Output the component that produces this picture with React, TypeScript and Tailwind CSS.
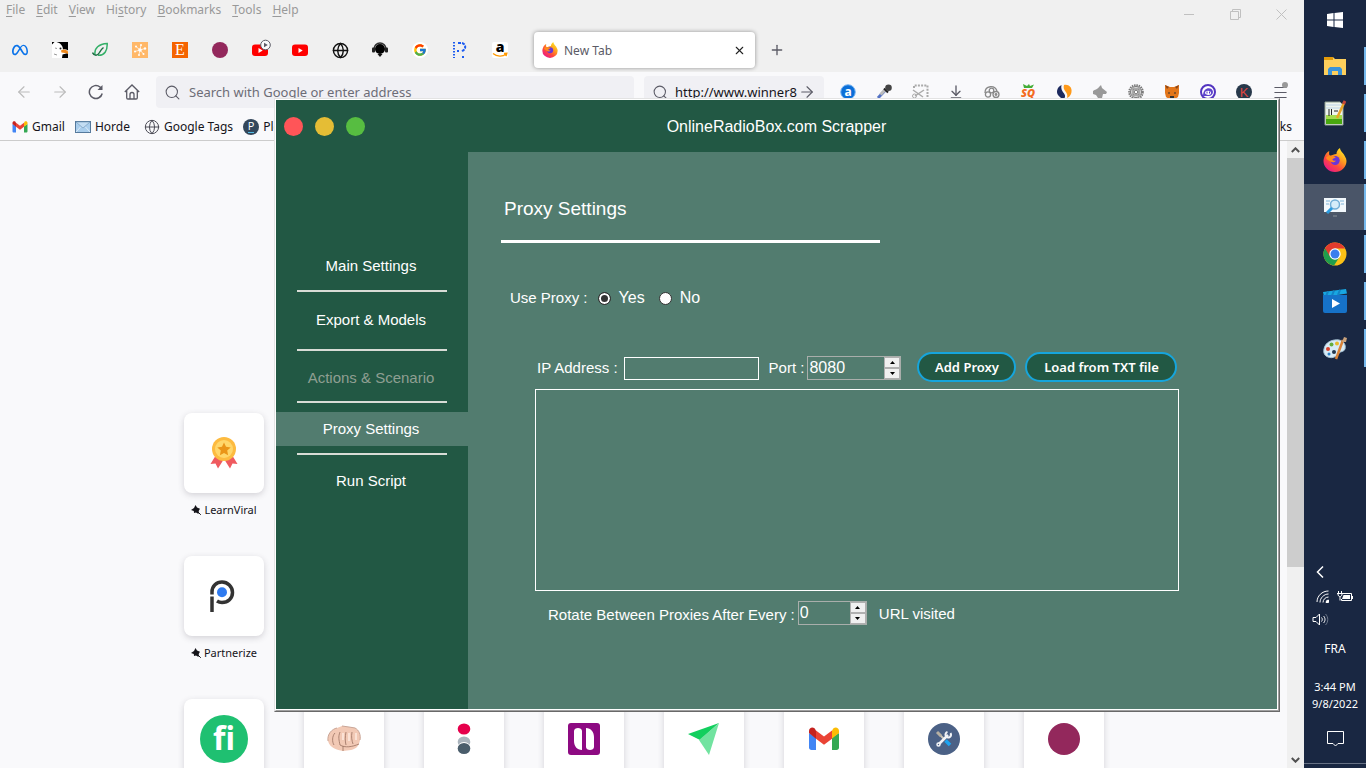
import type { ReactNode } from 'react'
import { ArrowDownToLine, ArrowLeft, ArrowRight, Globe, Menu, Plus, Search, X } from 'lucide-react'
import { FaMeta } from 'react-icons/fa6'
import { FcGoogle } from 'react-icons/fc'

const UI_FONT = "font-['Noto_Sans','Open_Sans',sans-serif]"
const APP_FONT = "font-['Liberation_Sans',Arial,sans-serif]"

/* ---------- logos ---------- */

const FirefoxIcon = ({ size = 16 }: { size?: number }) => (
  <svg width={size} height={size} viewBox="0 0 24 24" aria-hidden="true">
    <defs>
      <linearGradient id="ffBody" x1="0.85" y1="0.1" x2="0.2" y2="0.95">
        <stop offset="0" stopColor="#ffe226" />
        <stop offset="0.35" stopColor="#ff9a1f" />
        <stop offset="0.65" stopColor="#ff4a3d" />
        <stop offset="1" stopColor="#e9178a" />
      </linearGradient>
    </defs>
    <path
      d="M22 8.500C21 6 19 4.500 17.800 2.500 17.300 1.500 17 .8 17 0c-2.500 1.500-3.600 4.300-3.500 6-2.500.1-4.500 1-6 2.200L6.400 7C6 6 6 4.500 6.300 3 4.500 3.800 3 5.500 2 7.500c-1 2-1.500 4-1.500 5.500a11.500 11 0 0 0 23 0c0-1.500-.5-3-1.500-4.500Z"
      fill="url(#ffBody)"
    />
    <circle cx="12.200" cy="12.500" r="4.500" fill="#6a35d8" />
    <path d="M3 9.500c2.500-3 7.500-2.500 9.800.3-1.800.2-3 1-3.400 2 .5 1 2 1.300 3.600.9-1 1.300-3.200 2.400-6 .5-1.800-1.300-3.800-1.500-4-3.700Z" fill="#ff8a1c" />
  </svg>
)

const GmailIcon = ({ size = 16 }: { size?: number }) => (
  <svg width={size} height={size} viewBox="0 0 32 32" aria-hidden="true">
    <path d="M1 10v14.500c0 1.400 1 2.500 2.500 2.500H8V14.500Z" fill="#4285f4" />
    <path d="M31 10v14.500c0 1.400-1 2.500-2.500 2.500H24V14.500Z" fill="#34a853" />
    <path d="M24 7.500v8L31 10V8c0-3.200-3.200-4.500-5.500-2.800Z" fill="#fbbc04" />
    <path d="M8 7.500 16 13.500 24 7.500v8.200L16 21.700 8 15.700Z" fill="#ea4335" />
    <path d="M8 7.500v8.200L1 10V8c0-3.200 3.200-4.500 5.500-2.800Z" fill="#c5221f" />
  </svg>
)

const YoutubeIcon = ({ playing = false }: { playing?: boolean }) => (
  <svg width="20" height="20" viewBox="0 0 20 20" overflow="visible" aria-hidden="true">
    <rect x="2" y="4.500" width="16" height="11.500" rx="3" fill="#f00" />
    <path d="M8.500 8v5l4.200-2.500Z" fill="#fff" />
    {playing && (
      <g>
        <circle cx="15.500" cy="5" r="4.800" fill="#f9f9fb" stroke="#5b5b66" />
        <path d="M14 2.700v4.600l3.800-2.300Z" fill="#5b5b66" />
      </g>
    )}
  </svg>
)

const EagleIcon = () => (
  <svg width="16" height="16" viewBox="0 0 16 16" aria-hidden="true">
    <path d="M0 0h16v16H0Z" fill="#fff" />
    <path d="M4.500 0H16v8.500c-1.500-1-3-1.500-5-1C10.800 3.500 8.500 1 4.500 0Z" />
    <path d="M10.500 12.500 16 11v5h-6Z" />
    <path d="M0 0h2.500L0 2.500Z" />
    <path d="M9 8.500c3-2 5.500-.5 7 1v2.500c-2-1.500-4-1-6.500-1.500Z" fill="#f08a1d" />
    <circle cx="8.500" cy="6.500" r="1" fill="#222" />
    <path d="M3 6l2 .5M2 12l3 1" stroke="#999" />
  </svg>
)

const LeafIcon = () => (
  <svg width="16" height="16" viewBox="0 0 16 16" fill="none" aria-hidden="true">
    <path d="M3 13C2 6 7 2 15.200 1.500c.3 7-2.700 12.300-9.200 11.800" stroke="#34b068" strokeWidth="1.500" />
    <path d="M.5 10.500c2 4 5 3.500 7 0 1-2 2-3.500 4-5" stroke="#1f6e45" strokeWidth="1.500" />
  </svg>
)

const HubIcon = () => (
  <svg width="16" height="16" viewBox="0 0 16 16" aria-hidden="true">
    <path d="M0 0h16v16H0Z" fill="#ffb869" />
    <path d="M8 8 4 4.500M8 8l1-5M8 8l5-1.500M8 8l3.500 4M8 8l-1 4.500M8 8 3 9.500" stroke="#fff" strokeWidth=".7" />
    <g fill="#fff">
      <circle cx="8" cy="8" r="1.800" />
      <circle cx="4" cy="4.500" r="1" />
      <circle cx="9" cy="3" r="1" />
      <circle cx="13" cy="6.500" r="1.200" />
      <circle cx="11.500" cy="12" r="1" />
      <circle cx="7" cy="13" r="1" />
      <circle cx="3" cy="9.500" r="1" />
    </g>
  </svg>
)

const EtsyIcon = () => (
  <span className="flex size-4 items-center justify-center bg-[#f56400] font-['Liberation_Serif',serif] text-base leading-4 text-white">E</span>
)

const HeadsetIcon = () => (
  <svg width="16" height="16" viewBox="0 0 16 16" aria-hidden="true">
    <path d="M2 7a6 6 0 0 1 12 0" stroke="#333" strokeWidth="1.500" fill="none" />
    <circle cx="8" cy="7" r="5" fill="#000" />
    <rect y="5.500" width="3" height="5" rx="1" fill="#222" />
    <rect x="13" y="5.500" width="3" height="5" rx="1" fill="#222" />
    <path d="M5.500 12h5L8 15Z" fill="#111" />
  </svg>
)

const DotsPIcon = () => (
  <svg width="16" height="16" viewBox="0 0 16 16" fill="none" stroke="#1d5cf0" strokeWidth="2" aria-hidden="true">
    <path d="M2 0v16" strokeDasharray="1.500 1.500" />
    <path d="M6 1h4a4 4 0 0 1 1 7.500L9.500 10" strokeDasharray="3 1" />
    <path d="M5 9h3M10 15h3" strokeDasharray="2 1" />
  </svg>
)

const AmazonIcon = () => (
  <span className="relative flex size-4 items-center justify-center rounded-xs bg-white">
    <span className="-mt-1.5 font-['Open_Sans',sans-serif] text-[14px] leading-5 font-extrabold text-black">a</span>
    <svg className="absolute inset-0" width="16" height="16" viewBox="0 0 16 16" aria-hidden="true">
      <path d="M1 11.500c4 3.300 9.500 3.300 13 .8M12 11.500l2.800-.2-.8 2.800" stroke="#f90" strokeWidth="1.400" fill="none" />
    </svg>
  </span>
)

const MailIcon = () => (
  <svg width="16" height="16" viewBox="0 0 16 16" aria-hidden="true">
    <rect x=".5" y="2.500" width="15" height="11" fill="#a9cdec" stroke="#55799c" />
    <path d="M1 13l5-5.500M15 13l-5-5.500" fill="none" stroke="#dcebf8" />
    <path d="M1 3l7 6 7-6Z" fill="#c3ddf3" stroke="#6f93b5" strokeWidth=".6" />
  </svg>
)

const PleskIcon = () => (
  <svg width="16" height="16" viewBox="0 0 16 16" aria-hidden="true">
    <circle cx="8" cy="8" r="8" fill="#33475b" />
    <text x="8" y="11" textAnchor="middle" fontFamily="Open Sans" fontSize="11" fill="#fff">P</text>
    <path d="M5 13.500h6" stroke="#53bce6" />
  </svg>
)

const ReloadIcon = () => (
  <svg width="16" height="16" viewBox="0 0 16 16" fill="none" stroke="#5b5b66" strokeWidth="1.500" aria-hidden="true">
    <path d="M14.200 9.500A6.500 6.500 0 1 1 12 3l1.500 1.500" />
    <path d="M14.500 1v5h-5Z" fill="#5b5b66" stroke="none" />
  </svg>
)

const HomeIcon = () => (
  <svg width="16" height="16" viewBox="0 0 16 16" fill="none" stroke="#5b5b66" strokeWidth="1.300" aria-hidden="true">
    <path d="M.8 8 8 1l7.200 7M2.700 6.500v7.300c0 .8.4 1.200 1.200 1.200h8.200c.8 0 1.200-.4 1.200-1.200V6.500M6 15v-4.500a2 2 0 0 1 4 0V15" />
  </svg>
)

/* ---------- toolbar extensions ---------- */

const extensions: { name: string; icon: ReactNode }[] = [
  {
    name: 'Ahrefs',
    icon: (
      <>
        <circle cx="8" cy="8" r="7.300" fill="#0b6fd8" stroke="#7cb6f2" />
        <text x="8" y="12" textAnchor="middle" fontFamily="Open Sans" fontWeight="700" fontSize="12" fill="#fff">a</text>
      </>
    ),
  },
  {
    name: 'Color picker',
    icon: (
      <>
        <path d="M2 14 9 6.500" stroke="#5472c4" strokeWidth="3" />
        <path d="M4.500 10.500 9.500 5.500" stroke="#bbb" strokeWidth="3" />
        <path d="M8 4.500 12 8.500" stroke="#222" strokeWidth="2" />
        <circle cx="12.500" cy="3.800" r="3.300" fill="#444" />
      </>
    ),
  },
  {
    name: 'Screenshot',
    icon: (
      <g fill="none" stroke="#aaa">
        <path d="M2 4V1.500h13.500V13" strokeWidth="2" strokeDasharray="2 1.200" />
        <path d="M1 6l10 7M12 6 3 12" strokeWidth="1.500" />
        <circle cx="2.500" cy="12" r="2" />
      </g>
    ),
  },
  { name: 'Downloads', icon: <ArrowDownToLine size={16} color="#5b5b66" strokeWidth={2} /> },
  {
    name: 'Cookies',
    icon: (
      <g fill="none" stroke="#888" strokeWidth="1.300">
        <path d="M1 9c0-8 10-8 12-2" />
        <circle cx="4" cy="10.500" r="2.600" />
        <circle cx="7.500" cy="6.500" r="2.300" />
        <circle cx="12" cy="10.500" r="3" />
        <circle cx="12" cy="10.500" r=".8" />
      </g>
    ),
  },
  {
    name: 'SEOquake',
    icon: (
      <>
        <path d="M3 0 7 2l2-2 1 2 4-1.500-2 3.500H4Z" fill="#44ad37" />
        <text x="8" y="13" textAnchor="middle" fontFamily="Open Sans" fontStyle="italic" fontWeight="800" fontSize="11" fill="#f36c21">SQ</text>
      </>
    ),
  },
  {
    name: 'Similarweb',
    icon: (
      <>
        <path d="M5.500 1C1 3 0 8 2 11c2 3 6 5 7 2 1-4-5-5-3.500-12Z" fill="#1d2a5e" />
        <path d="M8 1c6-1 9 4 7 9-1 2-2 3-4 4 2-6-5-7-3-13Z" fill="#ff9a1a" />
      </>
    ),
  },
  { name: 'Wappalyzer', icon: <path d="M1 7c2-2 4-1 6-4l2-2 1 3 5 4-1 2-3 0-1 4H6L4 11 1 10Z" fill="#999" /> },
  {
    name: 'Settings',
    icon: (
      <g fill="none" stroke="#777">
        <circle cx="8" cy="8" r="6.800" strokeWidth="2" strokeDasharray="1.500 .8" />
        <circle cx="8" cy="8" r="5.500" fill="#ddd" />
        <circle cx="8" cy="8" r="1.800" fill="#fff" />
        <path d="M5 5h6v6H5Z" />
      </g>
    ),
  },
  {
    name: 'MetaMask',
    icon: (
      <>
        <path d="m1 1 5 2h4l5-2v8l-1 4-3 2H5l-3-2-1-4Z" fill="#e2761b" />
        <path d="m1 1 4 2-2 2Zm14 0-4 2 2 2Z" fill="#8a4518" />
        <path d="M4 8.500h2v1H4Zm6 0h2v1h-2ZM6 12h4v2H6Z" fill="#333" />
      </>
    ),
  },
  {
    name: 'Ghostery',
    icon: (
      <>
        <circle cx="8" cy="8" r="7" fill="#fff" stroke="#5335c0" strokeWidth="2" />
        <path d="M3 12C3 2 13 3 13 8c0 2-2 4-4 4Z" fill="#5e45cc" />
        <path d="M5 9c0-3 6-3 6 0s-6 2-6 0Z" fill="#fff" />
        <path d="M7 7.500v2M9.500 7.500v2" stroke="#5335c0" />
      </>
    ),
  },
  {
    name: 'Keywords',
    icon: (
      <>
        <circle cx="8" cy="8" r="8" fill="#27384a" />
        <text x="8" y="13" textAnchor="middle" fontFamily="Liberation Sans" fontSize="13" fill="#e0443f">K</text>
      </>
    ),
  },
]

const pinnedTabs: { name: string; icon: ReactNode }[] = [
  { name: 'Meta', icon: <FaMeta size={16} color="#0a73ea" /> },
  { name: 'Eagle', icon: <EagleIcon /> },
  { name: 'Leaf', icon: <LeafIcon /> },
  { name: 'Hub', icon: <HubIcon /> },
  { name: 'Etsy', icon: <EtsyIcon /> },
  { name: 'Radio', icon: <span className="size-4 rounded-full bg-[#93285c]" /> },
  { name: 'YouTube playing', icon: <YoutubeIcon playing /> },
  { name: 'YouTube', icon: <YoutubeIcon /> },
  { name: 'Web', icon: <Globe size={17} color="#111" strokeWidth={2} /> },
  { name: 'Support', icon: <HeadsetIcon /> },
  {
    name: 'Google',
    icon: (
      <span className="rounded-full bg-white p-px">
        <FcGoogle size={14} />
      </span>
    ),
  },
  { name: 'Pixels', icon: <DotsPIcon /> },
  { name: 'Amazon', icon: <AmazonIcon /> },
]

/* ---------- browser ---------- */

const menus = [
  ['', 'F', 'ile'],
  ['', 'E', 'dit'],
  ['', 'V', 'iew'],
  ['Hi', 's', 'tory'],
  ['', 'B', 'ookmarks'],
  ['', 'T', 'ools'],
  ['', 'H', 'elp'],
]

const MenuBar = () => (
  <div className="flex h-7 items-start justify-between bg-[#f0f0f0]">
    <div className="flex gap-[11px] pl-1.5 pt-0.5 text-[12px] leading-4 text-[#999]">
      {menus.map(([before, key, after]) => (
        <button key={after}>
          {before}
          <span className="underline underline-offset-2">{key}</span>
          {after}
        </button>
      ))}
    </div>
    <div className="flex pt-1.5 text-[#c0c0c0]">
      <button aria-label="Minimize" className="flex h-4 w-[46px] items-center justify-center">
        <span className="h-px w-2.5 bg-current" />
      </button>
      <button aria-label="Restore" className="flex h-4 w-[46px] items-center justify-center">
        <svg width="11" height="11" viewBox="0 0 11 11" fill="none" stroke="currentColor" aria-hidden="true">
          <path d="M.5 2.500h8v8h-8ZM2.500 2.500v-2h8v8h-2" />
        </svg>
      </button>
      <button aria-label="Close" className="flex h-4 w-[46px] items-center justify-center">
        <svg width="11" height="11" viewBox="0 0 11 11" fill="none" stroke="currentColor" aria-hidden="true">
          <path d="m.5.5 10 10M10.500.5l-10 10" />
        </svg>
      </button>
    </div>
  </div>
)

const TabStrip = () => (
  <div className="flex h-11 items-center bg-[#f0f0f0]">
    {pinnedTabs.map((tab) => (
      <button key={tab.name} aria-label={tab.name} className="flex h-9 w-10 items-center justify-center">
        {tab.icon}
      </button>
    ))}
    <div className="ml-3.5 flex h-9 w-[221px] items-center rounded bg-white px-2 text-[12px] text-[#5b5b66] shadow-[0_0_4px_rgba(0,0,0,0.4)]">
      <FirefoxIcon />
      <span className="ml-1.5 flex-1 pt-px">New Tab</span>
      <button aria-label="Close tab" className="flex size-4 items-center justify-center">
        <X size={13} color="#222" strokeWidth={2} />
      </button>
    </div>
    <button aria-label="New tab" className="ml-0.5 flex h-9 w-10 items-center justify-center">
      <Plus size={16} color="#5b5b66" strokeWidth={2} />
    </button>
  </div>
)

const NavBar = () => (
  <div className="flex h-10 items-center bg-[#f9f9fb] px-1.5 text-[#5b5b66]">
    <button aria-label="Back" className="flex w-9 justify-center text-[#bbb]">
      <ArrowLeft size={18} strokeWidth={1.500} />
    </button>
    <button aria-label="Forward" className="flex w-9 justify-center text-[#bbb]">
      <ArrowRight size={18} strokeWidth={1.500} />
    </button>
    <button aria-label="Reload" className="flex w-9 justify-center">
      <ReloadIcon />
    </button>
    <button aria-label="Home" className="flex w-9 justify-center">
      <HomeIcon />
    </button>
    <label className="ml-1.5 flex h-8 min-w-0 flex-1 items-center rounded bg-[#f0f0f4] px-2">
      <Search size={17} strokeWidth={1.500} />
      <input
        aria-label="Address"
        placeholder="Search with Google or enter address"
        className="ml-2 min-w-0 flex-1 pt-0.5 text-[13px] outline-none placeholder:text-[#6d6d77]"
      />
    </label>
    <label className="ml-2.5 flex h-8 w-[180px] items-center rounded bg-[#f0f0f4] px-2">
      <Search size={17} strokeWidth={1.500} />
      <input aria-label="Search" defaultValue="http://www.winner8" className="ml-1.5 w-[123px] pt-0.5 text-[13px] text-[#15141a] outline-none" />
      <ArrowRight size={18} strokeWidth={1.500} />
    </label>
    <div className="ml-1.5 flex">
      {extensions.map((ext) => (
        <button key={ext.name} aria-label={ext.name} className="flex w-9 justify-center">
          <svg width="16" height="16" viewBox="0 0 16 16" overflow="visible">
            {ext.icon}
          </svg>
        </button>
      ))}
      <button aria-label="Application menu" className="relative flex w-9 justify-center">
        <Menu size={17} strokeWidth={1.500} />
        <span className="absolute -top-0.5 right-2.5 size-1.5 rounded-full bg-[#999]" />
      </button>
    </div>
  </div>
)

const BookmarksBar = () => (
  <div className="flex h-[29px] items-center gap-2.5 border-b border-[#ccc] bg-[#f9f9fb] px-3 pt-px text-[12px] text-[#15141a]">
    <a href="#gmail" className="flex items-center gap-1">
      <GmailIcon />
      Gmail
    </a>
    <a href="#horde" className="flex items-center gap-1">
      <MailIcon />
      Horde
    </a>
    <a href="#tags" className="ml-1 flex items-center gap-1">
      <Globe size={16} color="#4b4b55" strokeWidth={1.500} />
      Google Tags
    </a>
    <a href="#plesk" className="flex items-center gap-1">
      <PleskIcon />
      Plesk
    </a>
    <button className="ml-auto">Other Bookmarks</button>
  </div>
)

const MedalIcon = () => (
  <svg width="32" height="32" viewBox="0 0 32 32" aria-hidden="true">
    <path d="M8 18 2.500 27l5-.5 2.500 5 5-8ZM24 18l5.500 9-5-.5-2.500 5-5-8Z" fill="#ef5a5f" />
    <circle cx="16" cy="12" r="12" fill="#fdbb40" />
    <circle cx="16" cy="12" r="9" fill="#ffd76b" />
    <path d="m16 5.500 2 4.300 4.700.6-3.500 3.200.9 4.700-4.100-2.300-4.100 2.300.9-4.700-3.500-3.200 4.700-.6Z" fill="#ea9518" />
  </svg>
)

const PartnerizeIcon = () => (
  <svg width="32" height="32" viewBox="0 0 32 32" fill="none" aria-hidden="true">
    <path d="M4 14.500V12C4 6 8.500 2 14 2s10.500 4.500 10.500 10.500S20 22.500 14 22.500c-2 0-3.500-.5-5-1.500" stroke="#333" strokeWidth="3.500" />
    <path d="M4 16.500V32" stroke="#333" strokeWidth="3.500" />
    <circle cx="14" cy="12.200" r="5" fill="#2f7bf0" />
  </svg>
)

const FistIcon = () => (
  <svg width="34" height="28" viewBox="0 0 34 28" aria-hidden="true">
    <path d="M1 16C0 9 5 4 10 3L15 1l7 1 6 1c4 2 6 7 5 12-1 6-4 9-9 10l-8 1C10 25 3 23 1 16Z" fill="#f2c9b5" />
    <path d="M8 8c-3 3-3 9-1 12M13 7c-2 5-1 8 0 13M19 7c-1 5-1 9 0 13M25 7c-1 5 0 9 1 12M13 20c5 3 12 2 19-1M16 21v5" fill="none" stroke="#9b7161" strokeWidth=".8" />
    <path d="M15 1l7 1 6 1c4 2 6 7 5 12M1 16C0 9 5 4 10 3" fill="none" stroke="#c9a596" />
    <path d="M16 8v7M22 8v8M29 8v7" stroke="#fbe2d5" strokeWidth="2" />
  </svg>
)

const ToolsIcon = () => (
  <svg width="32" height="32" viewBox="0 0 32 32" fill="none" aria-hidden="true">
    <circle cx="16" cy="16" r="16" fill="#4b6186" />
    <path d="m10.500 10.500 6 6" stroke="#ccc6b9" strokeWidth="2" />
    <path d="m9 9 4 4" stroke="#b7b0a2" strokeWidth="3" />
    <path d="m17.500 17.500 4.500 4.500" stroke="#1da4f2" strokeWidth="3.500" />
    <path d="m11 21 9-9" stroke="#f2f4f7" strokeWidth="2.500" />
    <circle cx="10.500" cy="21.500" r="1.500" stroke="#f2f4f7" strokeWidth="1.500" />
    <path d="M22.500 10a2.800 2.800 0 1 1-3-1M22.500 12.500l.5-1.500" stroke="#f2f4f7" strokeWidth="2" />
  </svg>
)

const PinIcon = () => (
  <svg width="10" height="10" viewBox="0 0 10 10" aria-hidden="true">
    <path d="M4.500 0 6 2.500l3 1.200-1.200 2L7.500 9 5 7.500 3 8 2.800 6 0 5l3-2Z" fill="#15141a" />
    <path d="m6 6 3.800 3.800" stroke="#15141a" />
  </svg>
)

const shortcuts: { name: string; icon: ReactNode }[] = [
  {
    name: 'Fiverr',
    icon: (
      <span className="flex size-12 items-center justify-center rounded-full bg-[#1fc071] pb-0.5 font-['Open_Sans',sans-serif] text-[32px] leading-[44px] font-bold text-white">
        fi
      </span>
    ),
  },
  { name: 'Fist', icon: <FistIcon /> },
  {
    name: 'Signal',
    icon: (
      <svg width="14" height="32" viewBox="0 0 14 32" aria-hidden="true">
        <ellipse cx="7" cy="6" rx="6.300" ry="5.500" fill="#e6004c" />
        <ellipse cx="7" cy="19" rx="6.300" ry="5.500" fill="#aab4bd" />
        <ellipse cx="7" cy="25.500" rx="7" ry="6.500" fill="#fff" />
        <ellipse cx="7" cy="25.500" rx="6.300" ry="5.500" fill="#4a5d6b" />
      </svg>
    ),
  },
  {
    name: 'Nordnet',
    icon: (
      <svg width="32" height="32" viewBox="0 0 32 32" aria-hidden="true">
        <rect width="32" height="32" rx="3" fill="#8d0a82" />
        <path d="M6 8c0-4 8-4 8 0v19C9 27 6 23 6 18ZM18 5c5 0 8 4 8 9v10c0 4-8 4-8 0Z" fill="#fff" />
      </svg>
    ),
  },
  {
    name: 'Paper plane',
    icon: (
      <svg width="32" height="32" viewBox="0 0 32 32" aria-hidden="true">
        <path d="M0 11 31 0 12 17Z" fill="#12cf5e" />
        <path d="M31 0 21 32 11 17Z" fill="#71e3a0" />
      </svg>
    ),
  },
  { name: 'Gmail', icon: <GmailIcon size={32} /> },
  { name: 'Tools', icon: <ToolsIcon /> },
  { name: 'Radio', icon: <span className="size-8 rounded-full bg-[#93285c]" /> },
]

const Tile = ({ name, icon, label }: { name: string; icon: ReactNode; label?: string }) => (
  <a href={`#${name}`} aria-label={name} className="flex flex-col items-center text-[#15141a]">
    <span className="flex size-20 items-center justify-center rounded-lg bg-white shadow-[0_2px_6px_rgba(58,57,68,0.2)]">{icon}</span>
    {label && (
      <span className="mt-2 flex items-center gap-[3px] text-[11px] leading-[18px]">
        <PinIcon />
        {label}
      </span>
    )}
  </a>
)

const NewTabPage = () => (
  <div className="flex min-h-0 flex-1 bg-[#f9f9fb]">
    <div className="flex min-w-0 flex-1 justify-center overflow-hidden pl-px pt-68">
      <div className="grid auto-rows-[143px] grid-cols-[repeat(8,80px)] gap-x-10">
        <Tile name="LearnViral" label="LearnViral" icon={<MedalIcon />} />
        <div className="col-start-1">
          <Tile name="Partnerize" label="Partnerize" icon={<PartnerizeIcon />} />
        </div>
        <div className="col-start-1">
          <Tile {...shortcuts[0]} />
        </div>
        {shortcuts.slice(1).map((item) => (
          <Tile key={item.name} {...item} />
        ))}
      </div>
    </div>
    <div className="flex w-[17px] flex-col bg-[#f0f0f0]">
      <button aria-label="Scroll up" className="flex h-[17px] items-center justify-center">
        <svg width="9" height="6" viewBox="0 0 9 6" fill="none" stroke="#505050" strokeWidth="2" aria-hidden="true">
          <path d="m.8 5 3.700-3.700L8.200 5" />
        </svg>
      </button>
      <div className="h-[409px] bg-[#cdcdcd]" />
      <button aria-label="Scroll down" className="mt-auto flex h-[17px] items-center justify-center">
        <svg width="9" height="6" viewBox="0 0 9 6" fill="none" stroke="#505050" strokeWidth="2" aria-hidden="true">
          <path d="m.8 1 3.700 3.700L8.200 1" />
        </svg>
      </button>
    </div>
  </div>
)

/* ---------- scrapper window ---------- */

const navItems = [
  { label: 'Main Settings', style: 'text-white', line: 'mt-[7px] mb-[11px]' },
  { label: 'Export & Models', style: 'text-white', line: 'mt-3 mb-2.5' },
  { label: 'Actions & Scenario', style: 'text-[#8f9f92]', line: 'mt-1.5 mb-[9px]' },
  { label: 'Proxy Settings', style: 'text-white bg-[#527c6f]', line: 'mt-[7px] mb-[9px]' },
  { label: 'Run Script', style: 'text-white', line: '' },
]

const SpinBox = ({ id, value, width }: { id: string; value: string; width: string }) => (
  <span className={`flex h-6 border border-[#a9aeab] ${width}`}>
    <input id={id} defaultValue={value} className="min-w-0 flex-1 pl-px text-[16px] leading-5 text-white outline-none" />
    <span className="flex w-4 flex-col bg-[#f0f0f0]">
      <button aria-label={`Increase ${id}`} className="flex flex-1 items-center justify-center border border-[#b0b0b0]">
        <svg width="5" height="3" viewBox="0 0 5 3" aria-hidden="true">
          <path d="M0 3h5L2.500 0Z" />
        </svg>
      </button>
      <button aria-label={`Decrease ${id}`} className="flex flex-1 items-center justify-center border border-[#b0b0b0]">
        <svg width="5" height="3" viewBox="0 0 5 3" aria-hidden="true">
          <path d="M0 0h5L2.500 3Z" />
        </svg>
      </button>
    </span>
  </span>
)

const radioClass =
  'mr-2 size-[13px] appearance-none rounded-full border border-[#333] bg-white checked:bg-[#333] checked:shadow-[inset_0_0_0_2px_#fff]'
const pillClass = `h-[30px] rounded-full border-2 border-[#16a5dc] bg-[#225844] text-[13px] font-semibold text-white ${UI_FONT}`

const ScrapperWindow = () => (
  <section
    className={`absolute top-[98px] right-6 bottom-14 left-[274px] flex border border-t-[#e3e3e3] border-r-[#696969] border-b-[#696969] border-l-[#e3e3e3] ${APP_FONT}`}
  >
    <div className="flex min-w-0 flex-1 flex-col border border-t-white border-r-[#a0a0a0] border-b-[#a0a0a0] border-l-white bg-white pr-px pb-px text-[15px] leading-5 text-white">
      <header className="grid h-[52px] shrink-0 grid-cols-[1fr_auto_1fr] items-center bg-[#225844]">
        <div className="flex gap-3 pl-2">
          <button aria-label="Close" className="size-[19px] rounded-full bg-[#ff5558]" />
          <button aria-label="Minimize" className="size-[19px] rounded-full bg-[#e5bd35]" />
          <button aria-label="Maximize" className="size-[19px] rounded-full bg-[#57bd41]" />
        </div>
        <h1 className="pt-0.5 text-[16px]">OnlineRadioBox.com Scrapper</h1>
      </header>
      <div className="flex min-h-0 flex-1">
        <nav className="flex w-48 shrink-0 flex-col bg-[#225844] pt-[97px]">
          {navItems.map((item) => (
            <div key={item.label}>
              <button className={`h-[34px] w-full pr-0.5 ${item.style}`}>{item.label}</button>
              {item.line && <div className={`mx-[21px] h-0.5 bg-[#d8dcd6] ${item.line}`} />}
            </div>
          ))}
        </nav>
        <main className="min-w-0 flex-1 overflow-hidden bg-[#527c6f] pr-[98px] pl-[33px]">
          <h2 className="mt-[45px] ml-[3px] text-[19px] leading-6">Proxy Settings</h2>
          <div className="mt-[19px] h-[3px] w-[379px] bg-white" />
          <fieldset className="mt-[45px] ml-[9px] flex h-5 items-center">
            <legend className="float-left mr-2.5 h-5">Use Proxy :</legend>
            <label className="mr-3.5 flex items-center text-[16px]">
              <input type="radio" name="useProxy" defaultChecked className={radioClass} />
              Yes
            </label>
            <label className="flex items-center text-[16px]">
              <input type="radio" name="useProxy" className={radioClass} />
              No
            </label>
          </fieldset>
          <div className="mt-11 ml-9 flex items-center">
            <label htmlFor="ip" className="pt-0.5">
              IP Address :
            </label>
            <input id="ip" className="mt-0.5 ml-1.5 h-[23px] w-[135px] border border-white outline-none" />
            <label htmlFor="port" className="mr-[3px] ml-2.5 pt-0.5">
              Port :
            </label>
            <span className="pt-0.5">
              <SpinBox id="port" value="8080" width="w-[94px]" />
            </span>
            <button className={`ml-4 w-[99px] ${pillClass}`}>Add Proxy</button>
            <button className={`ml-[9px] w-[152px] ${pillClass}`}>Load from TXT file</button>
          </div>
          <textarea aria-label="Proxy list" className="mt-[7px] ml-[34px] block h-[202px] w-[calc(100%-34px)] resize-none border border-white outline-none" />
          <div className="mt-2.5 ml-[47px] flex items-center">
            <label htmlFor="rotate" className="pt-1">
              Rotate Between Proxies After Every :
            </label>
            <span className="ml-[3px]">
              <SpinBox id="rotate" value="0" width="w-[69px]" />
            </span>
            <span className="ml-3 pt-0.5">URL visited</span>
          </div>
        </main>
      </div>
    </div>
  </section>
)

/* ---------- taskbar ---------- */

const apps: { name: string; active?: boolean; icon: ReactNode }[] = [
  {
    name: 'Explorer',
    icon: (
      <svg width="22" height="20" viewBox="0 0 22 20" aria-hidden="true">
        <path d="M0 1h9l2 2h11v16H0Z" fill="#fdcf5c" />
        <path d="M0 1h9v3H0Z" fill="#e39b0a" />
        <path d="M4 19v-6l2-2h10l2 2v6h-4v-4H8v4Z" fill="#3a93d9" />
      </svg>
    ),
  },
  {
    name: 'Editor',
    icon: (
      <svg width="22" height="26" viewBox="0 0 22 26" aria-hidden="true">
        <path d="M1 2h15l3 3v20H1Z" fill="#eef5ee" stroke="#90a090" />
        <path d="M2 15h16v9H2Z" fill="#a4dc4e" />
        <path d="M2 19h16v5H2Z" fill="#48a80f" />
        <path d="M2 5h16M2 8h16" stroke="#bcd3e8" />
        <path d="M5 9v7M7.500 9v6M10 11h4" stroke="#222" />
        <path d="m20 3-7 15" stroke="#e8a526" strokeWidth="2.500" />
        <path d="m21 1-1.500 3" stroke="#c8483a" strokeWidth="3" />
      </svg>
    ),
  },
  { name: 'Firefox', icon: <FirefoxIcon size={24} /> },
  {
    name: 'Magnifier',
    active: true,
    icon: (
      <svg width="24" height="20" viewBox="0 0 24 20" aria-hidden="true">
        <path d="M1 1h22v14H1Z" fill="#f2f8fc" />
        <path d="M1 15h22v2H1Z" fill="#4e5866" />
        <path d="M3 4h4M3 7h3M17 4h4M18 7h3" stroke="#b8d6ea" strokeWidth="2" />
        <circle cx="12" cy="7.500" r="4.500" fill="#d6edfa" stroke="#73aed6" strokeWidth="1.500" />
        <path d="m9 11-5 5" stroke="#2b9be0" strokeWidth="3" />
        <path d="M10 19h4" stroke="#69737f" strokeWidth="2" />
      </svg>
    ),
  },
  {
    name: 'Chrome',
    icon: (
      <svg width="24" height="24" viewBox="0 0 24 24" aria-hidden="true">
        <circle cx="12" cy="12" r="11.500" fill="#fbc116" />
        <path d="M12 12 2 6.300A11.500 11.500 0 0 0 11 23.500L16.500 15Z" fill="#1f9d4d" />
        <path d="M2 6.300A11.500 11.500 0 0 1 22.100 6.500H12l-5 8Z" fill="#e33b2e" />
        <circle cx="12" cy="12" r="5.700" fill="#fff" />
        <circle cx="12" cy="12" r="4.500" fill="#3b7ded" />
      </svg>
    ),
  },
  {
    name: 'Movies',
    icon: (
      <svg width="24" height="24" viewBox="0 0 24 24" aria-hidden="true">
        <path d="M0 3 23 0l1 4.500L1 8Z" fill="#18a7e2" />
        <path d="m5 2.400-2 5M11 1.600 9 6.700M17 .8l-2 5" stroke="#1483c4" strokeWidth="2" />
        <path d="M0 6h24v16a2 2 0 0 1-2 2H2a2 2 0 0 1-2-2Z" fill="#1672c8" />
        <path d="M9 10v9l8-4.500Z" fill="#fff" />
      </svg>
    ),
  },
  {
    name: 'Paint',
    icon: (
      <svg width="24" height="24" viewBox="0 0 24 24" aria-hidden="true">
        <path d="M1 13C2 6 10 3 16 4c5 1 7 5 6 9-1 3-4 2-6 4-2 3-6 6-11 4-3-1-5-4-4-8Z" fill="#d8ebf6" stroke="#a9c4d6" />
        <circle cx="5" cy="13" r="2" fill="#d8412c" />
        <circle cx="8.500" cy="8.500" r="2" fill="#64ad3c" />
        <circle cx="14" cy="7.500" r="2" fill="#e9b92a" />
        <circle cx="11" cy="16" r="2" fill="#22364c" />
        <circle cx="6" cy="18" r="1.500" fill="#2b83c9" />
        <path d="m20 4-7 19" stroke="#d98238" strokeWidth="2.500" />
        <path d="m19 6 2-5 3 1-1 4Z" fill="#c9a27c" />
      </svg>
    ),
  },
]

const Taskbar = () => (
  <aside className="flex w-[62px] shrink-0 flex-col items-stretch bg-[#192742] text-center text-[12px] text-white">
    <button aria-label="Start" className="flex h-[43px] items-center justify-center pb-1">
      <svg width="16" height="16" viewBox="0 0 16 16" fill="#fff" aria-hidden="true">
        <path d="M0 2 6.500 1v6.500H0ZM7.500.9 16 0v7.500H7.500ZM0 8.500h6.500V15L0 14ZM7.500 8.500H16V16l-8.500-1Z" />
      </svg>
    </button>
    {apps.map((app) => (
      <button
        key={app.name}
        aria-label={app.name}
        className={`mb-px flex h-[46px] items-center ${app.active ? 'bg-[#4a5568]' : ''}`}
      >
        <span className="flex flex-1 justify-center pl-0.5">{app.icon}</span>
        <span className={`w-0.5 bg-[#76b9ed] ${app.active ? 'h-full' : 'h-[38px]'}`} />
      </button>
    ))}
    <div className="mt-auto flex flex-col">
      <button aria-label="Show hidden icons" className="ml-3 flex h-4 items-center">
        <svg width="8" height="12" viewBox="0 0 8 12" fill="none" stroke="#fff" strokeWidth="1.500" aria-hidden="true">
          <path d="M7 .5 1.500 6 7 11.500" />
        </svg>
      </button>
      <div className="mt-2.5 ml-3 flex items-center gap-2">
        <svg width="13" height="13" viewBox="0 0 13 13" fill="none" stroke="#fff" aria-hidden="true">
          <path d="M1 12C1 6 6 1 12.500 1M4 12.500C4 8 8 4 12.500 4M7 12.500C7 9.500 9.500 7 12.500 7" />
          <path d="M10 12.500a2.500 2.500 0 0 1 2.500-2.500v2.500Z" fill="#fff" />
        </svg>
        <svg width="16" height="12" viewBox="0 0 16 12" fill="none" stroke="#fff" aria-hidden="true">
          <path d="M5.500 2.500h9v7h-10V8M15.500 5v3M1.500 0v2M4.500 0v2M0 2.500h6M1 3c0 3.500 4 3.500 4 0M3 6v3.500" />
          <path d="M6.500 4h6.500v4H5Z" fill="#fff" stroke="none" />
        </svg>
      </div>
      <svg className="mt-2.5 ml-2" width="17" height="13" viewBox="0 0 17 13" fill="none" stroke="#fff" aria-hidden="true">
        <path d="M1 4.500h3L7.500 1v11L4 8.500H1ZM9.500 4.500c1 1 1 3 0 4M11.500 3c2 2 2 5 0 7" />
        <path d="M13.500 1c3 3 3 8 0 11" stroke="#6d788b" />
      </svg>
      <span className="mt-3.5 leading-[18px]">FRA</span>
      <time className="mt-5 text-[11px] leading-[17px]">
        3:44 PM
        <br />
        9/8/2022
      </time>
      <button aria-label="Notifications" className="mt-[19px] flex h-4 items-center justify-center">
        <svg width="17" height="16" viewBox="0 0 17 16" fill="none" stroke="#fff" aria-hidden="true">
          <path d="M.5.5h16v12h-5.500L8.500 15 6 12.500H.5Z" />
        </svg>
      </button>
      <div className="mt-4 mb-1 h-px bg-[#667185]" />
    </div>
  </aside>
)

const App = () => {
  return (
    <div className={`flex h-screen min-h-[640px] overflow-hidden ${UI_FONT}`}>
      <div className="relative flex min-w-0 flex-1 flex-col">
        <MenuBar />
        <TabStrip />
        <NavBar />
        <BookmarksBar />
        <NewTabPage />
        <ScrapperWindow />
      </div>
      <Taskbar />
    </div>
  )
}

export default App
